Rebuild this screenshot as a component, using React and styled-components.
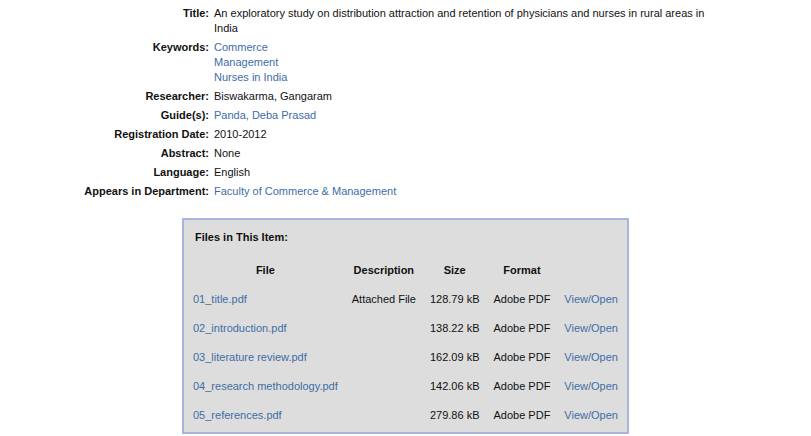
import React from "react";
import styled, { createGlobalStyle } from "styled-components";

const Global = createGlobalStyle`
  html, body { margin: 0; padding: 0; background: #ffffff; }
  body { font-family: "Liberation Sans", Arial, sans-serif; font-size: 11px; color: #111; }
`;

const Page = styled.div`
  width: 811px;
  padding-top: 4px;
`;

const Meta = styled.dl`
  display: grid;
  grid-template-columns: 128px 495px;
  column-gap: 5px;
  margin: 0 0 0 81px;
`;

const Label = styled.dt`
  font-weight: bold;
  text-align: right;
  line-height: 15px;
  padding: 2px 0;
  margin: 0;
`;

const Value = styled.dd`
  margin: 0;
  line-height: 15px;
  padding: 2px 0;
  display: flex;
  flex-direction: column;
`;

const Link = styled.a`
  color: #3d6da6;
  text-decoration: none;
`;

const FilesBox = styled.div`
  width: 439px;
  margin: 17px auto 0;
  border: 2px solid #aab5df;
  background: #dddddd;
  padding: 10px 2px 2px 2px;
  box-sizing: content-box;
`;

const FilesTitle = styled.div`
  font-weight: bold;
  line-height: 15px;
  padding-left: 9px;
  margin-bottom: 11px;
`;

const Table = styled.table`
  border-collapse: collapse;
`;

const Th = styled.th`
  font-weight: bold;
  text-align: center;
  line-height: 15px;
  padding: 7px 7px;
`;

const Td = styled.td`
  text-align: ${(p) => p.$align || "left"};
  line-height: 15px;
  padding: 7px 7px;
  white-space: nowrap;
`;

const meta = [
  { label: "Title:", values: ["An exploratory study on distribution attraction and retention of physicians and nurses in rural areas in India"] },
  { label: "Keywords:", values: ["Commerce", "Management", "Nurses in India"], link: true },
  { label: "Researcher:", values: ["Biswakarma, Gangaram"] },
  { label: "Guide(s):", values: ["Panda, Deba Prasad"], link: true },
  { label: "Registration Date:", values: ["2010-2012"] },
  { label: "Abstract:", values: ["None"] },
  { label: "Language:", values: ["English"] },
  { label: "Appears in Department:", values: ["Faculty of Commerce & Management"], link: true },
];

const files = [
  { name: "01_title.pdf", desc: "Attached File", size: "128.79 kB" },
  { name: "02_introduction.pdf", desc: "", size: "138.22 kB" },
  { name: "03_literature review.pdf", desc: "", size: "162.09 kB" },
  { name: "04_research methodology.pdf", desc: "", size: "142.06 kB" },
  { name: "05_references.pdf", desc: "", size: "279.86 kB" },
];

export default function App() {
  return (
    <Page>
      <Global />
      <Meta>
        {meta.map((m) => (
          <React.Fragment key={m.label}>
            <Label>{m.label}</Label>
            <Value>
              {m.values.map((v) =>
                m.link ? (
                  <Link key={v} href="#">{v}</Link>
                ) : (
                  <span key={v}>{v}</span>
                )
              )}
            </Value>
          </React.Fragment>
        ))}
      </Meta>
      <FilesBox>
        <FilesTitle>Files in This Item:</FilesTitle>
        <Table>
          <thead>
            <tr>
              <Th>File</Th>
              <Th>Description</Th>
              <Th>Size</Th>
              <Th>Format</Th>
              <Th></Th>
            </tr>
          </thead>
          <tbody>
            {files.map((f) => (
              <tr key={f.name}>
                <Td><Link href="#">{f.name}</Link></Td>
                <Td $align="center">{f.desc}</Td>
                <Td $align="center">{f.size}</Td>
                <Td $align="center">Adobe PDF</Td>
                <Td><Link href="#">View/Open</Link></Td>
              </tr>
            ))}
          </tbody>
        </Table>
      </FilesBox>
    </Page>
  );
}
